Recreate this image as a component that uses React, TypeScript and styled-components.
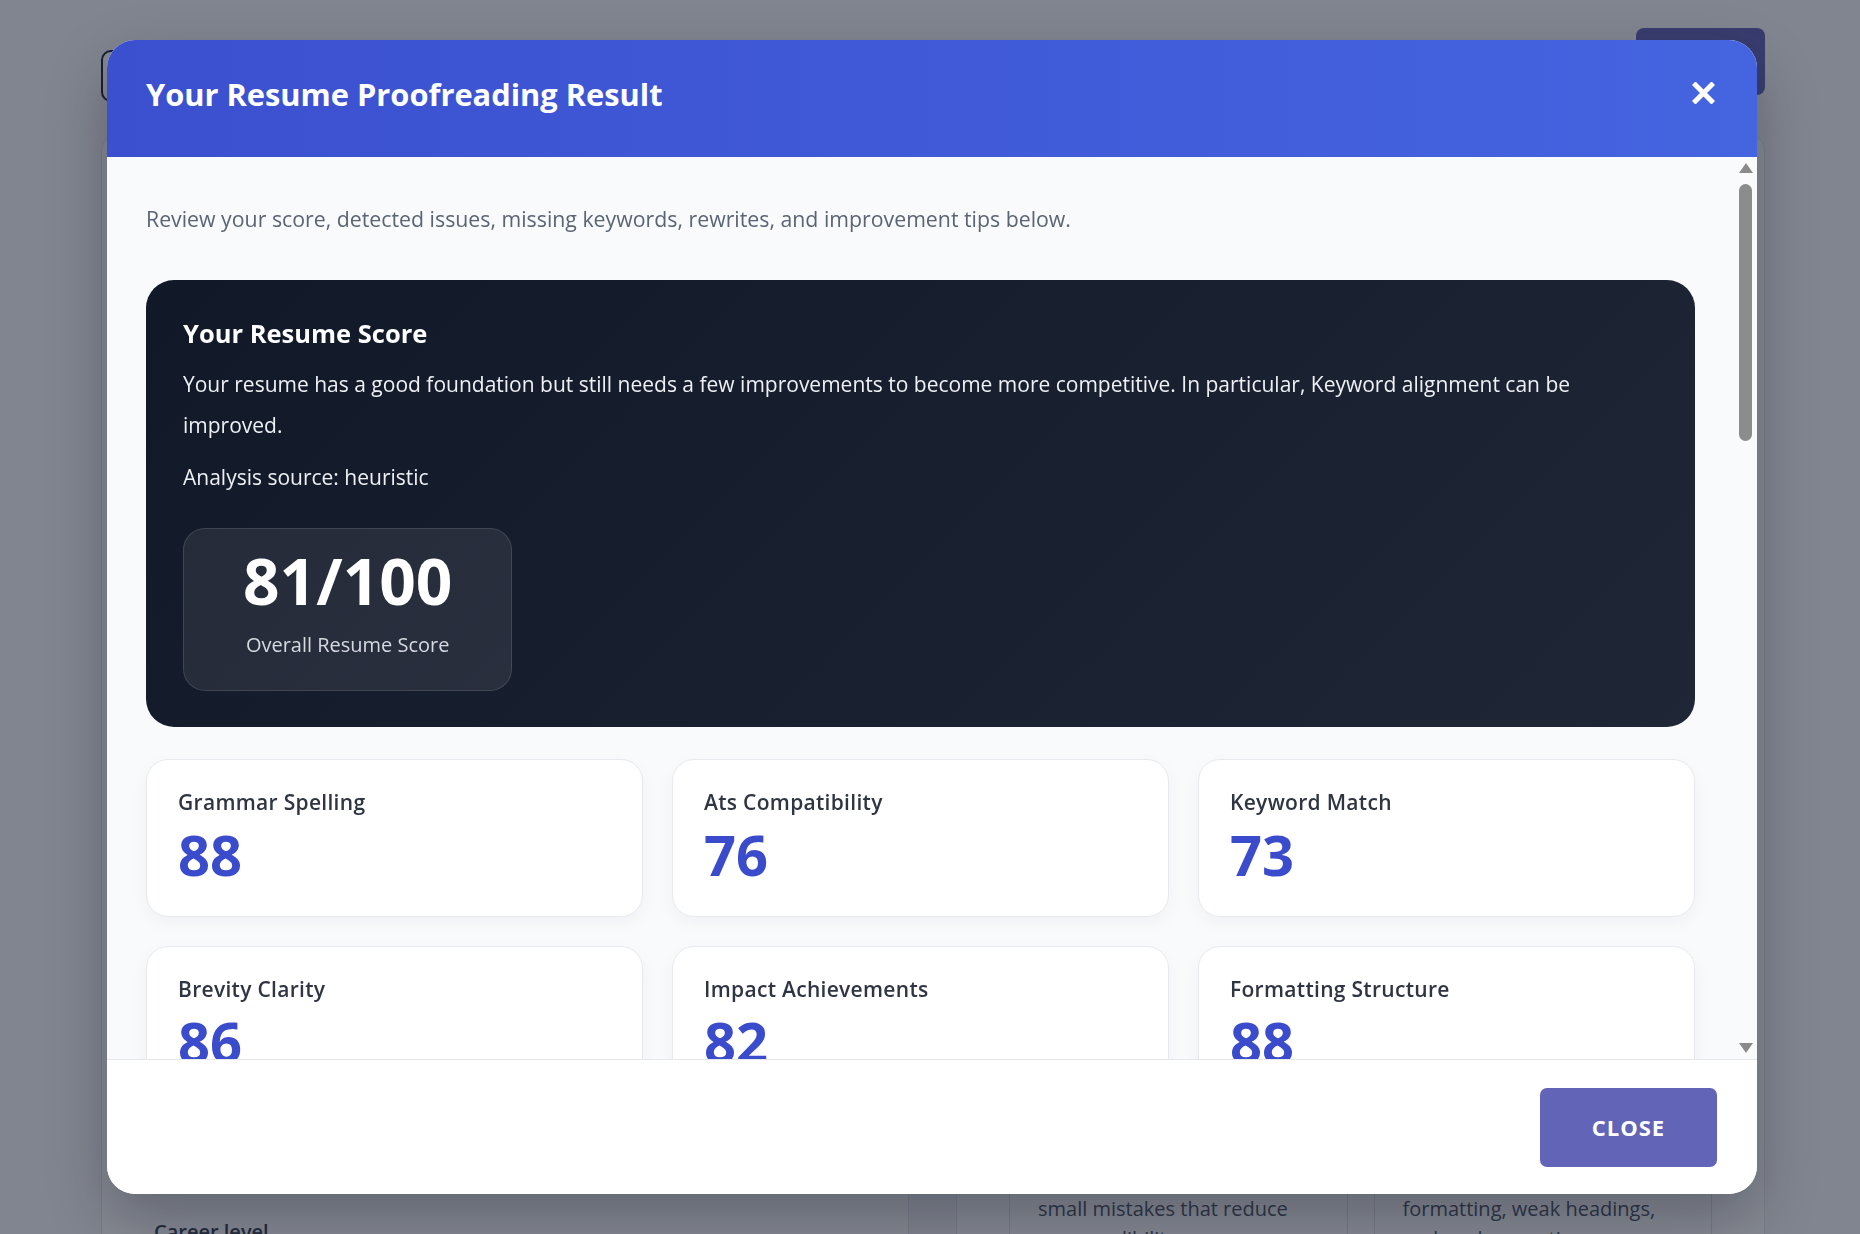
import React from "react";
import styled, { createGlobalStyle } from "styled-components";

const GlobalStyle = createGlobalStyle`
  * { box-sizing: border-box; }
  html, body { margin: 0; padding: 0; }
  body {
    font-family: "Open Sans", "Liberation Sans", Arial, sans-serif;
    background: #f5f6fa;
    color: #1f2937;
    overflow: hidden;
  }
`;

/* ---------- page behind the dialog ---------- */

const Page = styled.div`
  height: 1234px;
  overflow: hidden;
  padding: 28px 95px 0 101px;
  display: flex;
  flex-direction: column;
  gap: 30px;
`;

const TopBar = styled.header`
  display: flex;
  justify-content: space-between;
  align-items: flex-start;
`;

const BackButton = styled.button`
  margin-top: 22px;
  width: 52px;
  height: 52px;
  border: 2px solid #1f2937;
  border-radius: 10px;
  background: #fff;
`;

const PrimaryButton = styled.button`
  width: 129px;
  height: 67px;
  border: none;
  border-radius: 8px;
  background: #6264b8;
  color: #fff;
  font: 600 20px "Open Sans", sans-serif;
`;

const Main = styled.main`
  display: grid;
  grid-template-columns: 808px 1fr;
  gap: 47px;
`;

const Panel = styled.section`
  background: #fff;
  border: 1px solid #e3e6ec;
  border-radius: 20px;
  padding: 44px 52px;
  min-height: 1300px;
`;

const PanelTitle = styled.h2`
  margin: 0 0 31px;
  font-size: 28px;
  line-height: 36px;
`;

const Field = styled.div`
  display: flex;
  flex-direction: column;
  gap: 10px;
  margin-bottom: 28px;
`;

const FieldLabel = styled.label`
  font-size: 20px;
  line-height: 24px;
  font-weight: 600;
  color: #374151;
`;

const Input = styled.div<{ $h?: number }>`
  height: ${(p) => p.$h ?? 56}px;
  border: 1px solid #d1d5db;
  border-radius: 10px;
  background: #fff;
`;

const Lead = styled.p`
  margin: 12px 0 32px;
  font-size: 20px;
  line-height: 30px;
  color: #4b5563;
`;

const Steps = styled.div`
  height: 673px;
  border-radius: 16px;
  background: #f3f4f8;
  margin-bottom: 26px;
`;

const FeatureGrid = styled.div`
  display: grid;
  grid-template-columns: 1fr 1fr;
  gap: 26px;
`;

const Feature = styled.div`
  border: 1px solid #dfe2e8;
  border-radius: 16px;
  padding: 28px;
`;

const FeatureIcon = styled.div`
  width: 48px;
  height: 48px;
  border-radius: 12px;
  background: #e6e8fb;
  margin-bottom: 16px;
`;

const FeatureTitle = styled.h3`
  margin: 0 0 10px;
  font-size: 22px;
  line-height: 26px;
`;

const FeatureText = styled.p`
  margin: 0;
  font-size: 20px;
  line-height: 30px;
  color: #4b5563;
`;

/* ---------- dialog ---------- */

const Overlay = styled.div`
  position: fixed;
  inset: 0;
  background: rgba(17, 24, 39, 0.51);
  display: flex;
  align-items: center;
  justify-content: center;
`;

const Modal = styled.div`
  width: 1650px;
  height: 1154px;
  margin-left: 4px;
  border-radius: 28px;
  overflow: hidden;
  display: flex;
  flex-direction: column;
  background: #fff;
  box-shadow: 0 25px 60px rgba(15, 23, 42, 0.3);
`;

const ModalHeader = styled.div`
  flex: 0 0 117px;
  display: flex;
  align-items: center;
  justify-content: space-between;
  padding: 0 42px 9px 39px;
  background: linear-gradient(90deg, #3b50cf 0%, #4564e0 100%);
`;

const ModalTitle = styled.h1`
  margin: 0;
  color: #fff;
  font-size: 30.8px;
  font-weight: 700;
`;

const IconButton = styled.button`
  border: none;
  background: none;
  padding: 0;
  margin-bottom: 3px;
  display: flex;
  cursor: pointer;
`;

const BodyFrame = styled.div`
  position: relative;
  flex: 1;
  min-height: 0;
  background: #f9fafc;
`;

const ModalBody = styled.div`
  height: 100%;
  overflow-y: auto;
  padding: 50px 62px 40px 39px;
`;

/* drawn scrollbar: sits over the right edge of the scrolling body */
const ScrollRail = styled.div`
  position: absolute;
  top: 0;
  bottom: 0;
  right: 4px;
  width: 15px;
  pointer-events: none;
`;

const ScrollArrow = styled.div<{ $down?: boolean }>`
  position: absolute;
  left: 0.5px;
  ${(p) => (p.$down ? "bottom: 6px;" : "top: 6px;")}
  width: 0;
  height: 0;
  border-left: 7px solid transparent;
  border-right: 7px solid transparent;
  ${(p) => (p.$down ? "border-top: 10px solid #8a8a8a;" : "border-bottom: 10px solid #8a8a8a;")}
`;

const ScrollThumb = styled.div`
  position: absolute;
  top: 27px;
  left: 1px;
  width: 13px;
  height: 257px;
  border-radius: 7px;
  background: #8c8c8c;
`;

const Intro = styled.p`
  margin: 0 0 49px;
  font-size: 21.3px;
  line-height: 24px;
  color: #5b6475;
`;

const ScoreHero = styled.section`
  border-radius: 28px;
  padding: 38px 37px 36px;
  background: linear-gradient(135deg, #111827 0%, #1f2737 100%);
  color: #fff;
`;

const HeroTitle = styled.h2`
  margin: 0 0 16px;
  font-size: 25.5px;
  line-height: 30px;
  font-weight: 700;
`;

const HeroText = styled.p<{ $gap?: number }>`
  margin: ${(p) => p.$gap ?? 0}px 0 0;
  font-size: 21px;
  line-height: ${(p) => (p.$gap ? 42 : 41)}px;
  color: #eef0f4;
`;

const ScoreBox = styled.div`
  display: inline-flex;
  flex-direction: column;
  align-items: center;
  margin-top: 30px;
  padding: 20px 59px 33px;
  border-radius: 22px;
  background: rgba(255, 255, 255, 0.08);
  border: 1px solid rgba(255, 255, 255, 0.12);
`;

const ScoreValue = styled.div`
  font-size: 64px;
  line-height: 64px;
  font-weight: 700;
`;

const ScoreCaption = styled.div`
  margin-top: 20px;
  font-size: 20px;
  line-height: 24px;
  color: #d6d9e0;
`;

const MetricGrid = styled.div`
  display: grid;
  grid-template-columns: repeat(3, 1fr);
  gap: 29px;
  margin-top: 32px;
`;

const MetricCard = styled.div`
  background: #fff;
  border: 1px solid #e7e9ee;
  border-radius: 22px;
  padding: 30px 31px 34px;
  box-shadow: 0 6px 18px rgba(15, 23, 42, 0.04);
`;

const MetricLabel = styled.div`
  font-size: 21px;
  line-height: 24px;
  font-weight: 600;
  color: #2f3542;
  letter-spacing: 0.3px;
`;

const MetricValue = styled.div`
  margin-top: 12px;
  font-size: 56px;
  line-height: 56px;
  font-weight: 700;
  color: #3a4bcc;
`;

const Section = styled.section`
  margin-top: 40px;
  background: #fff;
  border: 1px solid #e7e9ee;
  border-radius: 22px;
  padding: 30px 31px;
`;

const SectionTitle = styled.h3`
  margin: 0 0 20px;
  font-size: 24px;
  line-height: 30px;
  color: #1f2937;
`;

const ItemList = styled.ul`
  list-style: none;
  margin: 0;
  padding: 0;
  display: flex;
  flex-direction: column;
  gap: 12px;
`;

const Item = styled.li`
  padding: 16px 20px;
  border-radius: 14px;
  background: #f6f7fb;
  font-size: 20px;
  line-height: 28px;
  color: #374151;
`;

const Chips = styled.div`
  display: flex;
  flex-wrap: wrap;
  gap: 12px;
`;

const Chip = styled.span`
  padding: 8px 18px;
  border-radius: 999px;
  background: #e8ebfb;
  color: #3a4bcc;
  font-size: 19px;
  font-weight: 600;
`;

const ModalFooter = styled.div`
  flex: 0 0 135px;
  display: flex;
  align-items: center;
  justify-content: flex-end;
  padding: 0 40px;
  border-top: 1px solid #e5e7eb;
  background: #fff;
`;

const CloseButton = styled.button`
  width: 177px;
  height: 79px;
  border: none;
  border-radius: 7px;
  background: #6264b8;
  color: #fff;
  font-family: "Open Sans", sans-serif;
  font-size: 22px;
  font-weight: 700;
  letter-spacing: 1px;
  cursor: pointer;
`;

const metrics = [
  { label: "Grammar Spelling", value: 88 },
  { label: "Ats Compatibility", value: 76 },
  { label: "Keyword Match", value: 73 },
  { label: "Brevity Clarity", value: 86 },
  { label: "Impact Achievements", value: 82 },
  { label: "Formatting Structure", value: 88 },
];

const issues = [
  "Several bullet points start with weak verbs such as \"responsible for\" instead of action verbs.",
  "Some achievements are described without measurable results or numbers.",
  "The summary section is longer than recommended and repeats information found later.",
  "Date formats are inconsistent between the experience and education sections.",
  "A few lines contain passive voice that makes the impact harder to read.",
];

const keywords = [
  "Project Management", "Stakeholder Communication", "Data Analysis", "Agile", "SQL",
  "Cross-functional Leadership", "KPI Tracking", "Process Improvement", "Budgeting",
];

const rewrites = [
  "Responsible for managing the team → Led a team of 6 engineers to deliver 3 product releases on schedule.",
  "Worked on sales reports → Built weekly sales dashboards that cut reporting time by 40%.",
  "Helped customers with problems → Resolved 30+ customer tickets per week with a 96% satisfaction rate.",
];

const tips = [
  "Start every bullet point with a strong action verb.",
  "Add numbers to show the scale and result of your work.",
  "Mirror the wording of the job description where it is accurate.",
  "Keep the resume to one or two pages with consistent formatting.",
  "Use standard section headings so ATS systems can parse them.",
];

function CloseIcon() {
  return (
    <svg width="23" height="22" viewBox="0 0 23 22">
      <path d="M3.5 3 L19.5 19 M19.5 3 L3.5 19" stroke="#fff" strokeWidth="5" strokeLinecap="square" />
    </svg>
  );
}

function BackgroundPage() {
  return (
    <Page>
      <TopBar>
        <BackButton aria-label="Back" />
        <PrimaryButton>Log in</PrimaryButton>
      </TopBar>
      <Main>
        <Panel>
          <PanelTitle>Upload your resume</PanelTitle>
          <Field><FieldLabel>Full name</FieldLabel><Input /></Field>
          <Field><FieldLabel>Email address</FieldLabel><Input /></Field>
          <Field><FieldLabel>Target role</FieldLabel><Input /></Field>
          <Field><FieldLabel>Industry</FieldLabel><Input /></Field>
          <Field><FieldLabel>Resume file</FieldLabel><Input $h={160} /></Field>
          <Field><FieldLabel>Job description</FieldLabel><Input $h={220} /></Field>
          <Field><FieldLabel>Career level</FieldLabel><Input /></Field>
        </Panel>
        <Panel>
          <PanelTitle>What we check</PanelTitle>
          <Lead>Our proofreader reviews every section of your resume and gives you clear, practical feedback.</Lead>
          <Steps />
          <FeatureGrid>
            <Feature>
              <FeatureIcon />
              <FeatureTitle>Grammar & spelling</FeatureTitle>
              <FeatureText>Spot grammar, spelling, and small mistakes that reduce your credibility.</FeatureText>
            </Feature>
            <Feature>
              <FeatureIcon />
              <FeatureTitle>Structure</FeatureTitle>
              <FeatureText>Identify inconsistent formatting, weak headings, and unclear sections.</FeatureText>
            </Feature>
          </FeatureGrid>
        </Panel>
      </Main>
    </Page>
  );
}

export default function App() {
  return (
    <>
      <GlobalStyle />
      <BackgroundPage />
      <Overlay>
        <Modal role="dialog" aria-modal="true">
          <ModalHeader>
            <ModalTitle>Your Resume Proofreading Result</ModalTitle>
            <IconButton aria-label="Close">
              <CloseIcon />
            </IconButton>
          </ModalHeader>
          <BodyFrame>
            <ModalBody>
              <Intro>Review your score, detected issues, missing keywords, rewrites, and improvement tips below.</Intro>
              <ScoreHero>
                <HeroTitle>Your Resume Score</HeroTitle>
                <HeroText>
                  Your resume has a good foundation but still needs a few improvements to become more competitive. In
                  particular, Keyword alignment can be improved.
                </HeroText>
                <HeroText $gap={10}>Analysis source: heuristic</HeroText>
                <ScoreBox>
                  <ScoreValue>81/100</ScoreValue>
                  <ScoreCaption>Overall Resume Score</ScoreCaption>
                </ScoreBox>
              </ScoreHero>
              <MetricGrid>
                {metrics.map((m) => (
                  <MetricCard key={m.label}>
                    <MetricLabel>{m.label}</MetricLabel>
                    <MetricValue>{m.value}</MetricValue>
                  </MetricCard>
                ))}
              </MetricGrid>
              <Section>
                <SectionTitle>Detected Issues</SectionTitle>
                <ItemList>
                  {issues.map((t) => (
                    <Item key={t}>{t}</Item>
                  ))}
                </ItemList>
              </Section>
              <Section>
                <SectionTitle>Missing Keywords</SectionTitle>
                <Chips>
                  {keywords.map((k) => (
                    <Chip key={k}>{k}</Chip>
                  ))}
                </Chips>
              </Section>
              <Section>
                <SectionTitle>Suggested Rewrites</SectionTitle>
                <ItemList>
                  {rewrites.map((t) => (
                    <Item key={t}>{t}</Item>
                  ))}
                </ItemList>
              </Section>
              <Section>
                <SectionTitle>Improvement Tips</SectionTitle>
                <ItemList>
                  {tips.map((t) => (
                    <Item key={t}>{t}</Item>
                  ))}
                </ItemList>
              </Section>
            </ModalBody>
            <ScrollRail aria-hidden="true">
              <ScrollArrow />
              <ScrollThumb />
              <ScrollArrow $down />
            </ScrollRail>
          </BodyFrame>
          <ModalFooter>
            <CloseButton>CLOSE</CloseButton>
          </ModalFooter>
        </Modal>
      </Overlay>
    </>
  );
}
